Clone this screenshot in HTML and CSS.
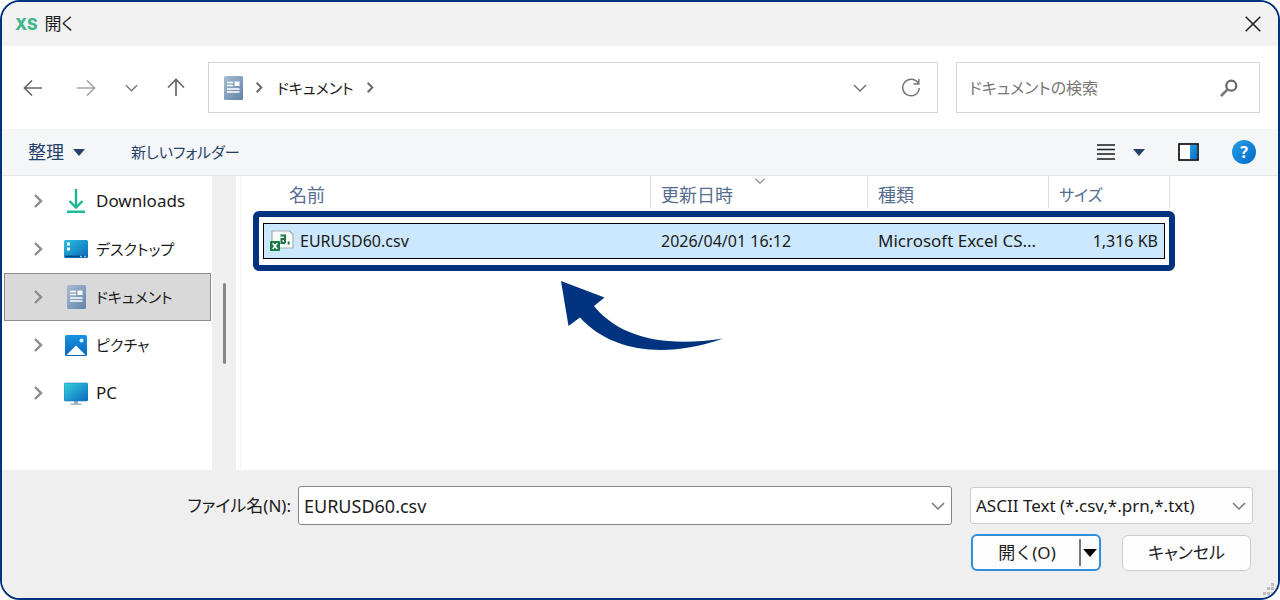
FILE: index.html
```html
<!DOCTYPE html>
<html lang="ja">
<head>
<meta charset="UTF-8">
<meta name="viewport" content="width=device-width, initial-scale=1">
<title>開く</title>
<link rel="stylesheet" href="styles.css">
</head>
<body>

<!-- Shared gradients and symbols -->
<svg class="defs" aria-hidden="true">
  <defs>
    <linearGradient id="gDoc" x1="0" y1="0" x2="1" y2="1"><stop offset="0" stop-color="#a9bdd2"/><stop offset="1" stop-color="#6083a8"/></linearGradient>
    <linearGradient id="gDesk" x1="0" y1="0" x2="1" y2="1"><stop offset="0" stop-color="#2cc0e0"/><stop offset="1" stop-color="#0a67b8"/></linearGradient>
    <linearGradient id="gPic" x1="0" y1="0" x2="0" y2="1"><stop offset="0" stop-color="#1a94e2"/><stop offset="1" stop-color="#0767bd"/></linearGradient>
    <linearGradient id="gPc" x1="0" y1="0" x2="1" y2="1"><stop offset="0" stop-color="#36d4dc"/><stop offset="1" stop-color="#0b66c0"/></linearGradient>
    <linearGradient id="gHelp" x1="0" y1="0" x2="1" y2="1"><stop offset="0" stop-color="#2a9fe4"/><stop offset="1" stop-color="#0069cc"/></linearGradient>
  </defs>
  <symbol id="doc" viewBox="0 0 24 24">
    <rect x="3" y="0" width="19" height="24" rx="1.5" fill="url(#gDoc)"/>
    <path d="M6 6.5h6M6 9.5h6M6 13h12.500M6 16h12.500" stroke="#fff" stroke-width="1.4"/>
    <rect x="13.500" y="5.500" width="5" height="4.500" fill="#fff"/>
  </symbol>
  <symbol id="chevDown" viewBox="0 0 14 8"><path d="M1 1l6 6 6-6" fill="none" stroke="currentColor" stroke-width="1.5"/></symbol>
  <symbol id="chevRight" viewBox="0 0 10 14"><path d="M2 1l6 6-6 6" fill="none" stroke="currentColor" stroke-width="2.4"/></symbol>
  <symbol id="triDown" viewBox="0 0 12 7"><path d="M0 0h12L6 7z" fill="currentColor"/></symbol>
</svg>

<div class="dialog">
  <header class="titlebar">
    <span class="logo">XS</span>
    <h1>開く</h1>
    <button class="icon-btn close" aria-label="閉じる">
      <svg width="16" height="16" viewBox="0 0 16 16"><path d="M.7.7l14.600 14.600M15.300.7L.7 15.300" stroke="#1b1b1b" stroke-width="1.5"/></svg>
    </button>
  </header>

  <nav class="navbar">
    <div class="history">
      <button class="icon-btn" aria-label="戻る">
        <svg width="20" height="18" viewBox="0 0 20 18"><path d="M19 9H2M9 1.500L1.500 9 9 16.500" fill="none" stroke="#666" stroke-width="1.700"/></svg>
      </button>
      <button class="icon-btn" aria-label="進む">
        <svg width="20" height="18" viewBox="0 0 20 18"><path d="M1 9h17M11 1.500L18.500 9 11 16.500" fill="none" stroke="#a6a6a6" stroke-width="1.700"/></svg>
      </button>
      <button class="icon-btn" aria-label="最近表示した場所">
        <svg width="13" height="8"><use href="#chevDown"/></svg>
      </button>
      <button class="icon-btn" aria-label="上へ">
        <svg width="18" height="19" viewBox="0 0 18 19"><path d="M9 18V2M1 9.500L9 1.500l8 8" fill="none" stroke="#666" stroke-width="1.700"/></svg>
      </button>
    </div>
    <div class="address">
      <svg width="24" height="24"><use href="#doc"/></svg>
      <svg class="crumb-sep" width="8" height="11"><use href="#chevRight"/></svg>
      <a href="#" class="kana">ドキュメント</a>
      <svg class="crumb-sep" width="8" height="11"><use href="#chevRight"/></svg>
      <button class="icon-btn history-btn" aria-label="以前の場所">
        <svg width="14" height="8"><use href="#chevDown"/></svg>
      </button>
      <button class="icon-btn" aria-label="最新の情報に更新">
        <svg width="20" height="20" viewBox="0 0 20 20"><path d="M17.300 5.500A8.300 8.300 0 1 0 18.300 10M17.800 1v5h-5.300" fill="none" stroke="#777" stroke-width="1.500"/></svg>
      </button>
    </div>
    <div class="search">
      <input type="search" class="kana" placeholder="ドキュメントの検索" aria-label="ドキュメントの検索">
      <svg width="18" height="18" viewBox="0 0 18 18"><circle cx="11.300" cy="6.700" r="5" fill="none" stroke="#666" stroke-width="2.200"/><path d="M7.800 10.200L1 17" stroke="#777" stroke-width="2.600"/></svg>
    </div>
  </nav>

  <div class="toolbar">
    <button class="tool">整理 <svg width="12" height="7"><use href="#triDown"/></svg></button>
    <button class="tool kana">新しいフォルダー</button>
    <div class="view-tools">
      <button class="icon-btn view" aria-label="表示の変更">
        <svg width="18" height="16" viewBox="0 0 18 16"><path d="M0 1h18M0 5.500h18M0 10h18M0 15h18" stroke="#1a1a1a" stroke-width="1.700"/></svg>
        <svg width="12" height="7"><use href="#triDown"/></svg>
      </button>
      <button class="icon-btn" aria-label="プレビュー ウィンドウ">
        <svg width="21" height="18" viewBox="0 0 21 18"><rect x="1" y="1" width="19" height="16" fill="#fff" stroke="#000" stroke-width="1.600"/><rect x="12" y="2" width="7.200" height="14" fill="url(#gHelp)"/></svg>
      </button>
      <button class="help" aria-label="ヘルプ">?</button>
    </div>
  </div>

  <main class="content">
    <ul class="tree">
      <li>
        <svg class="expand" width="10" height="14"><use href="#chevRight"/></svg>
        <svg width="24" height="24" viewBox="0 0 24 24"><path d="M12 0v18.500M5.500 12l6.500 6.500L18.500 12" fill="none" stroke="#1fb498" stroke-width="2.400"/><path d="M3 22.700h18" stroke="#20ba98" stroke-width="2.500"/></svg>
        <a href="#">Downloads</a>
      </li>
      <li>
        <svg class="expand" width="10" height="14"><use href="#chevRight"/></svg>
        <svg width="24" height="24" viewBox="0 0 24 24"><rect x="0" y="3" width="24" height="18" rx="1.500" fill="url(#gDesk)"/><path d="M3 5.500h3v3H3zM3 10.500h3v3H3z" fill="#fff"/><path d="M1 19.500h22" stroke="#064b8e" stroke-width="2"/><path d="M16 19.500h2M20 19.500h2" stroke="#7fd3f3" stroke-width="1.500"/></svg>
        <a href="#" class="kana">デスクトップ</a>
      </li>
      <li class="selected">
        <svg class="expand" width="10" height="14"><use href="#chevRight"/></svg>
        <svg width="24" height="24"><use href="#doc"/></svg>
        <a href="#" class="kana">ドキュメント</a>
      </li>
      <li>
        <svg class="expand" width="10" height="14"><use href="#chevRight"/></svg>
        <svg width="24" height="24" viewBox="0 0 24 24"><rect x="1" y="2" width="22" height="21" rx="1.500" fill="url(#gPic)"/><path d="M2.500 22L12 12.500 21.500 22z" fill="#fff"/><circle cx="17.500" cy="7.500" r="2" fill="#d9f0ff"/></svg>
        <a href="#" class="kana">ピクチャ</a>
      </li>
      <li>
        <svg class="expand" width="10" height="14"><use href="#chevRight"/></svg>
        <svg width="24" height="24" viewBox="0 0 24 24"><path d="M10 19h4v4h-4z" fill="#9bb0c0"/><path d="M6.500 23.200h11" stroke="#a9b8c4" stroke-width="1.600"/><rect x="0" y="2" width="24" height="18" rx="1.500" fill="url(#gPc)" stroke="#1a7fb5" stroke-width=".6"/></svg>
        <a href="#">PC</a>
      </li>
    </ul>
    <div class="scrollbar"><div class="thumb"></div></div>

    <section class="files">
      <table>
        <colgroup><col><col class="c-date"><col class="c-type"><col class="c-size"></colgroup>
        <thead>
          <tr>
            <th class="name">名前</th>
            <th>更新日時<svg class="sort" width="12" height="6"><use href="#chevDown"/></svg></th>
            <th>種類</th>
            <th class="kana">サイズ</th>
          </tr>
        </thead>
        <tbody>
          <tr>
            <td>
              <div class="file">
                <svg width="24" height="22" viewBox="0 0 24 22">
                  <path d="M2 1h17.500L23 4.500V18H2z" fill="#f7faf8" stroke="#a5adad" stroke-width="1.200" stroke-linejoin="round"/>
                  <path d="M10.500 5.500h4.500v7.500M15 9h-3.500v4H15M18.700 11.500v3" fill="none" stroke="#217346" stroke-width="2"/>
                  <rect x="0" y="11" width="10" height="10" rx="1" fill="#167a45"/>
                  <path d="M2.700 13.200l4.600 5.800M7.300 13.200L2.700 19" stroke="#fff" stroke-width="1.600"/>
                </svg>
                EURUSD60.csv
              </div>
            </td>
            <td>2026/04/01 16:12</td>
            <td class="type">Microsoft Excel CS...</td>
            <td class="size">1,316 KB</td>
          </tr>
        </tbody>
      </table>
      <div class="highlight"></div>
      <svg class="arrow" width="163" height="70" viewBox="0 0 163 70"><path d="M0 0l43.500 16.500L33 25C55 52 95 68 162 57.500 105 78 50 71 19 36.500L7.500 45z" fill="#00337f"/></svg>
    </section>
  </main>

  <footer class="footer">
    <div class="row">
      <label for="filename" class="kana">ファイル名(N):</label>
      <div class="combo">
        <input type="text" id="filename" value="EURUSD60.csv">
        <svg width="14" height="8"><use href="#chevDown"/></svg>
      </div>
      <div class="combo filter">
        <select aria-label="ファイルの種類"><option>ASCII Text (*.csv,*.prn,*.txt)</option></select>
        <svg width="14" height="8"><use href="#chevDown"/></svg>
      </div>
    </div>
    <div class="row actions">
      <div class="split">
        <button>開く(O)</button>
        <button class="more" aria-label="その他のオプション"><svg width="14" height="8"><use href="#triDown"/></svg></button>
      </div>
      <button class="cancel kana">キャンセル</button>
    </div>
    <svg class="grip" width="12" height="12" viewBox="0 0 12 12"><path d="M9 0h3v3H9zM5 4h3v3H5zM9 4h3v3H9zM1 9h3v3H1zM5 9h3v3H5zM9 9h3v3H9z" fill="#bdbdbd"/></svg>
  </footer>
</div>

</body>
</html>
```
FILE: styles.css
```css
* { box-sizing: border-box; }
body { margin: 0; background: #fff; color: #1b1b1b; font: 17px/24px "Noto Sans", "Noto Sans CJK JP", sans-serif; }
button, input, select { font: inherit; color: inherit; margin: 0; padding: 0; border: 0; background: none; outline: none; }
button { cursor: pointer; }
svg { display: block; flex: none; }
a { color: inherit; text-decoration: none; }
.defs { position: absolute; width: 0; height: 0; }
.kana { font-feature-settings: "palt"; }
.icon-btn { display: flex; align-items: center; justify-content: center; color: #777; }

.dialog { display: flex; flex-direction: column; min-height: 100vh; border: 2px solid #00337f; border-radius: 20px; overflow: hidden; }

/* Title bar */
.titlebar { display: flex; align-items: center; height: 44px; padding: 0 17px 0 13px; background: #f2f2f2; }
.titlebar h1 { margin: 0 0 0 7px; font-size: 17px; font-weight: 400; font-feature-settings: "palt"; }
.logo { font: 800 16px/24px Inter, sans-serif; color: #3fb98c; }
.close { margin-left: auto; }

/* Navigation */
.navbar { display: flex; align-items: center; height: 83px; padding: 0 18px 0 21px; }
.history { display: flex; align-items: center; gap: 29px; width: 185px; }
.history .icon-btn:nth-child(2) { margin-left: 4px; }
.address { display: flex; flex: 1; align-items: center; height: 51px; padding: 0 16px 0 12px; border: 1px solid #d4d4d4; }
.address a { margin: 0 12px 0 14px; font-size: 15px; }
.crumb-sep { color: #666; }
.address svg + .crumb-sep { margin-left: 10px; }
.history-btn { margin: 0 34px 0 auto; }
.search { display: flex; align-items: center; width: 304px; height: 51px; margin-left: 18px; padding: 0 21px 0 12px; border: 1px solid #d4d4d4; }
.search input { flex: 1; min-width: 0; font-size: 16px; }
.search input::placeholder { color: #777; opacity: 1; }

/* Toolbar */
.toolbar { display: flex; align-items: center; height: 47px; padding: 0 22px 0 26px; background: #f4f6f8; border-bottom: 1px solid #e5e7e9; color: #25426b; }
.tool { display: flex; align-items: center; gap: 9px; margin-right: 46px; font-size: 18px; }
.tool.kana { font-size: 15px; }
.view-tools { display: flex; align-items: center; gap: 33px; margin-left: auto; }
.view { gap: 18px; color: #25426b; }
.help { width: 24px; height: 24px; border-radius: 50%; background: linear-gradient(135deg, #2a9fe4, #0069cc); color: #fff; font-size: 16px; font-weight: 700; }

/* Folder tree */
.content { display: flex; flex: 1; }
.tree { width: 210px; margin: 0; padding: 1px 0 0; list-style: none; }
.tree li { display: flex; align-items: center; height: 48px; margin: 0 1px 0 2px; padding-left: 28px; border: 1px solid transparent; }
.tree .selected { background: #d9d9d9; border-color: #8c8c8c; }
.expand { margin-right: 21px; color: #8c8c8c; }
.tree a { margin-left: 8px; }
.tree .kana { font-size: 15px; }
.scrollbar { width: 24px; padding: 107px 10px 0 11px; background: #efefef; }
.thumb { height: 81px; border-radius: 2px; background: #868686; }

/* File list */
.files { position: relative; flex: 1; margin-left: 4px; padding: 0 113px 0 22px; border-left: 1px solid #f3f3f3; }
table { width: 100%; table-layout: fixed; border-collapse: separate; border-spacing: 0; }
.c-date { width: 217px; }
.c-type { width: 181px; }
.c-size { width: 116px; }
th { position: relative; height: 47px; padding: 7px 0 0 10px; color: #566e8f; font-size: 18px; font-weight: 400; text-align: left; vertical-align: top; }
th.name { padding-left: 26px; }
th.kana { font-size: 16px; }
th::after { content: ""; position: absolute; top: 0; right: 0; width: 1px; height: 32px; background: #dedede; }
th:last-child::after { right: -5px; }
.sort { position: absolute; top: 2px; left: calc(50% - 6px); color: #888; }
td { height: 36px; padding: 0 0 0 10px; background: #cce8ff; border: solid #000; border-width: 1px 0; font-size: 16px; }
td:first-child { padding-left: 6px; border-left-width: 1px; }
td:last-child { padding-right: 6px; border-right-width: 1px; }
td.type { font-size: 17px; }
.file { display: flex; align-items: center; gap: 6px; }
.size { text-align: right; }
.highlight { position: absolute; top: 35px; left: 12px; right: 103px; height: 60px; border: 6px solid #00337f; border-radius: 6px; }
.arrow { position: absolute; top: 105px; left: 320px; }

/* File name and buttons */
.footer { position: relative; height: 128px; padding: 16px 25px 0; background: #efefef; font-size: 18px; }
.row { display: flex; align-items: center; justify-content: flex-end; }
.row label { margin-right: 7px; font-size: 17px; }
.combo { display: flex; position: relative; align-items: center; width: 654px; height: 39px; background: #fff; border: 1px solid #868686; border-radius: 3px; }
.combo input, .combo select { width: 100%; height: 100%; padding: 0 30px 0 5px; appearance: none; }
.combo svg { position: absolute; right: 6px; color: #777; }
.filter { width: 283px; height: 37px; margin-left: 18px; border-color: #ccc; background: #fdfdfd; font-size: 17px; }
.actions { gap: 21px; margin-top: 9px; padding-right: 2px; font-size: 17px; }
.split { display: flex; width: 130px; height: 37px; padding: 3px 2px; border: 2px solid #2f8fdc; border-radius: 6px; background: #fdfdfd; }
.split button:first-child { flex: 1; }
.split .more { padding-left: 2px; border-left: 2px solid #777; color: #000; }
.cancel { width: 129px; height: 36px; border: 1px solid #ccc; border-radius: 6px; background: #fdfdfd; }
.grip { position: absolute; right: 4px; bottom: 3px; }
```
